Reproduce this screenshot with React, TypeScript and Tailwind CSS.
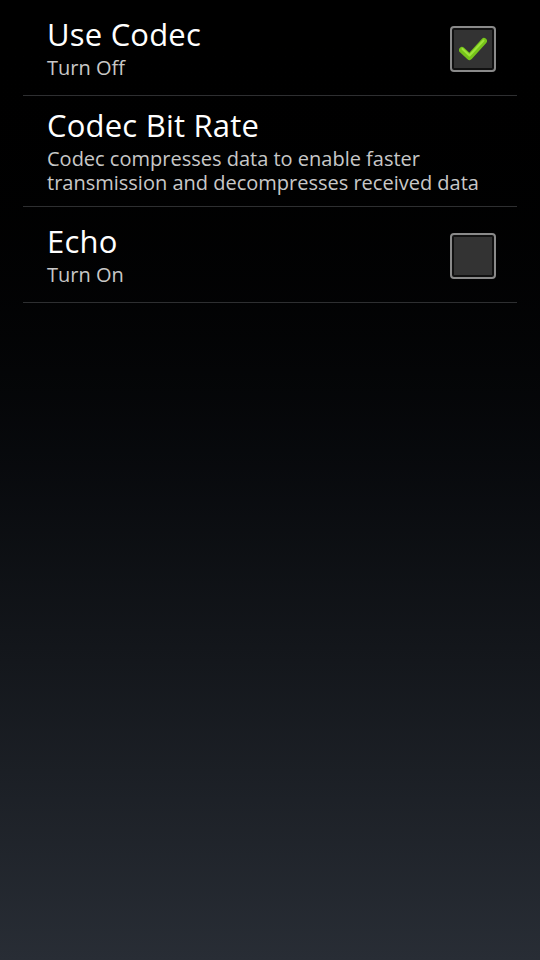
type Pref = {
  title: string
  summary: string
  checked?: boolean
}

const prefs: Pref[] = [
  { title: 'Use Codec', summary: 'Turn Off', checked: true },
  {
    title: 'Codec Bit Rate',
    summary:
      'Codec compresses data to enable faster transmission and decompresses received data',
  },
  { title: 'Echo', summary: 'Turn On', checked: false },
]

const CheckBox = ({ checked }: { checked: boolean }) => (
  <div className="w-[46px] h-[46px] rounded-[4px] border-2 border-[#8a8a8a] p-[2px] bg-[#111]">
    <div className="w-full h-full bg-[#333333] flex items-center justify-center">
      {checked ? (
        <svg width="28" height="24" viewBox="0 0 28 24">
          <path
            d="M3 13 L10.5 20 L25 4"
            fill="none"
            stroke="#76c41a"
            strokeWidth="6"
            strokeLinecap="round"
            strokeLinejoin="round"
          />
          <path
            d="M3.5 12 L10.5 18.5 L24.5 3.5"
            fill="none"
            stroke="#9ee33a"
            strokeWidth="2"
            strokeLinecap="round"
            strokeLinejoin="round"
          />
        </svg>
      ) : null}
    </div>
  </div>
)

const App = () => {
  return (
    <div
      className="w-[540px] h-[960px] bg-gradient-to-b from-[#000000] to-[#282d35] px-[23px]"
      style={{ fontFamily: '"Open Sans", "Noto Sans", sans-serif' }}
    >
      {prefs.map((pref) => (
        <div
          key={pref.title}
          className="flex items-center min-h-[96px] py-[11px] border-b border-[#2e2f31] pl-[24px] pr-[21px]"
        >
          <div className="flex-1">
            <div className="text-white text-[31px] leading-[36px] tracking-[0.2px]">
              {pref.title}
            </div>
            <div className="text-[#c8c8c8] text-[20px] leading-[24px] mt-[4px]">
              {pref.summary}
            </div>
          </div>
          {pref.checked !== undefined ? (
            <div className="ml-4 mt-[2px]">
              <CheckBox checked={pref.checked} />
            </div>
          ) : null}
        </div>
      ))}
    </div>
  )
}

export default App
